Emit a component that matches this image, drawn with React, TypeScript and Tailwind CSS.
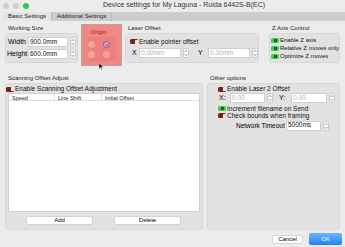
import React from "react";

const font = { fontFamily: '"Liberation Sans", Arial, sans-serif' };

// tiny macOS style stepper
const Stepper: React.FC = () => (
  <div className="w-[6px] h-[10px] rounded-[2px] bg-white border border-[#c9c9c9] flex items-center justify-center">
    <svg width="4" height="8" viewBox="0 0 4 8">
      <path d="M0.5 3 L2 1.3 L3.5 3" fill="none" stroke="#777" strokeWidth="0.7" />
      <path d="M0.5 5 L2 6.7 L3.5 5" fill="none" stroke="#777" strokeWidth="0.7" />
    </svg>
  </div>
);

const Toggle: React.FC<{ on?: boolean }> = ({ on }) =>
  on ? (
    <div className="w-[8px] h-[5px] shrink-0 rounded-[1.5px] bg-[#3ed14a] flex items-center justify-center">
      <div className="w-[3px] h-[3px] bg-[#1d5d22] rounded-[0.5px]" />
    </div>
  ) : (
    <div className="w-[8px] h-[5px] shrink-0 rounded-[1.5px] bg-[#7b2020] flex items-center justify-end pr-[0.5px]">
      <div className="w-[3px] h-[4px] bg-[#e8e8e8] rounded-[0.5px]" />
    </div>
  );

const Check: React.FC<{ on?: boolean; label: string; small?: boolean }> = ({
  on,
  label,
  small,
}) => (
  <div className="flex items-center gap-[1px] whitespace-nowrap">
    <Toggle on={on} />
    <span className={small ? "text-[6px] leading-[8px] text-[#111]" : "text-[6.5px] leading-[8px] text-[#111]"}>
      {label}
    </span>
  </div>
);

const Field: React.FC<{ value: string; w: string; muted?: boolean }> = ({ value, w, muted }) => (
  <div className="flex items-center gap-[2px]">
    <div
      className={`${w} h-[10px] bg-white border border-[#cfcfcf] flex items-center pl-[1px] text-[6.5px] leading-none whitespace-nowrap ${
        muted ? "text-[#b5b5b5]" : "text-[#111]"
      }`}
    >
      {value}
    </div>
    <Stepper />
  </div>
);

const GroupLabel: React.FC<{ children: React.ReactNode }> = ({ children }) => (
  <div className="text-[6px] leading-[7px] text-[#222] pl-[3px] whitespace-nowrap">{children}</div>
);

export default function App() {
  return (
    <div className="w-[345px] h-[247px] bg-[#ececec] overflow-hidden flex flex-col" style={font}>
      {/* title bar */}
      <div className="h-[11px] flex items-center">
        <div className="flex gap-[4px] pl-[3px]">
          <div className="w-[6px] h-[6px] rounded-full bg-[#cfcfcf]" />
          <div className="w-[6px] h-[6px] rounded-full bg-[#cfcfcf]" />
          <div className="w-[6px] h-[6px] rounded-full bg-[#34c748]" />
        </div>
        <div className="flex-1 text-center text-[7px] text-[#333] pr-[6px] whitespace-nowrap">
          Device settings for My Laguna - Ruida 6442S-B(EC)
        </div>
      </div>

      {/* tabs */}
      <div className="mt-[1px] ml-[3px] h-[9px] flex bg-[#cdcdcd] text-[6px] text-[#222] whitespace-nowrap">
        <div className="w-[49px] bg-[#e4e4e4] border-r border-[#b9b9b9] flex items-center justify-center">
          Basic Settings
        </div>
        <div className="w-[60px] border-r border-[#b9b9b9] flex items-center justify-center">
          Additional Settings
        </div>
      </div>

      {/* top row */}
      <div className="flex px-[5px] mt-[4px] h-[42px]">
        <div className="w-[73px] flex flex-col">
          <GroupLabel>Working Size</GroupLabel>
          <div className="mt-[1px] h-[30px] rounded-[3px] bg-[#e2e2e2] border border-[#d8d8d8] flex flex-col justify-center gap-[2px] pl-[1px]">
            <div className="flex items-center gap-[2px]">
              <span className="w-[19px] text-[7px] text-right">Width</span>
              <Field value="900.0mm" w="w-[40px]" />
            </div>
            <div className="flex items-center gap-[2px]">
              <span className="w-[19px] text-[7px] text-right">Height</span>
              <Field value="600.0mm" w="w-[40px]" />
            </div>
          </div>
        </div>

        {/* origin */}
        <div className="ml-[3px] w-[41px] h-[42px] -mt-[1px] bg-[#f28884] border border-[#b3a6a5] flex flex-col items-center relative">
          <div className="text-[6px] leading-[7px] text-[#9a2222] mt-[4px] -ml-[6px]">Origin</div>
          <div className="mt-[1px] w-[28px] h-[25px] rounded-[3px] bg-[#ec807c] grid grid-cols-2 gap-x-[3px] gap-y-[3px] place-content-center">
            <div className="w-[7px] h-[7px] rounded-full bg-[#f5a19d]" />
            <div className="w-[7px] h-[7px] rounded-full bg-[#f5a19d] border-[1.5px] border-[#7a5db3] flex items-center justify-center">
              <div className="w-[2px] h-[2px] rounded-full bg-[#7a5db3]" />
            </div>
            <div className="w-[7px] h-[7px] rounded-full bg-[#f5a19d]" />
            <div className="w-[7px] h-[7px] rounded-full bg-[#f5a19d]" />
          </div>
          {/* mouse cursor */}
          <svg className="absolute left-[17px] top-[38px]" width="5" height="7" viewBox="0 0 5 7">
            <path d="M0 0 L0 6 L1.5 4.6 L2.6 6.8 L3.4 6.4 L2.4 4.3 L4.5 4.3 Z" fill="#111" stroke="#fff" strokeWidth="0.4" />
          </svg>
        </div>

        {/* laser offset */}
        <div className="ml-[3px] w-[134px] flex flex-col">
          <GroupLabel>Laser Offset</GroupLabel>
          <div className="mt-[1px] h-[30px] rounded-[3px] bg-[#e2e2e2] border border-[#d8d8d8] flex flex-col justify-center gap-[2px] pl-[4px]">
            <Check label="Enable pointer offset" />
            <div className="flex items-center">
              <span className="w-[9px] text-[7px] pl-[2px]">X</span>
              <Field value="0.00mm" w="w-[42px]" muted />
              <span className="w-[16px] text-[7px] pl-[6px] ml-[3px]">Y</span>
              <Field value="0.00mm" w="w-[42px]" muted />
            </div>
          </div>
        </div>

        {/* z axis */}
        <div className="ml-[10px] w-[71px] flex flex-col">
          <GroupLabel>Z Axis Control</GroupLabel>
          <div className="mt-[1px] h-[30px] rounded-[3px] bg-[#e2e2e2] border border-[#d8d8d8] flex flex-col justify-center pl-[1px]">
            <Check on label="Enable Z axis" small />
            <Check on label="Relative Z moves only" small />
            <Check on label="Optimize Z moves" small />
          </div>
        </div>
      </div>

      {/* middle row */}
      <div className="flex px-[5px] mt-[8px] h-[155px]">
        <div className="w-[198px] flex flex-col">
          <GroupLabel>Scanning Offset Adjust</GroupLabel>
          <div className="mt-[1px] flex-1 rounded-[3px] bg-[#e2e2e2] border border-[#d8d8d8] flex flex-col px-[1px]">
            <div className="mt-[1px] -ml-[1px]">
              <Check label="Enable Scanning Offset Adjustment" />
            </div>
            <div className="mx-[1px] h-[119px] bg-white border border-[#d0d0d0] flex flex-col">
              <div className="h-[7px] flex text-[5.5px] text-[#222] border-b border-[#dedede] whitespace-nowrap">
                <div className="w-[46px] pl-[3px] border-r border-[#dedede]">Speed</div>
                <div className="w-[47px] pl-[3px] border-r border-[#dedede]">Line Shift</div>
                <div className="pl-[3px]">Initial Offset</div>
              </div>
            </div>
            <div className="flex mt-[4px] gap-[21px] pl-[19px]">
              <div className="w-[67px] h-[9px] bg-white rounded-[2px] border border-[#d3d3d3] text-[6px] flex items-center justify-center">
                Add
              </div>
              <div className="w-[67px] h-[9px] bg-white rounded-[2px] border border-[#d3d3d3] text-[6px] flex items-center justify-center">
                Delete
              </div>
            </div>
          </div>
        </div>

        <div className="ml-[4px] w-[133px] flex flex-col">
          <GroupLabel>Other options</GroupLabel>
          <div className="mt-[1px] flex-1 rounded-[3px] bg-[#e2e2e2] border border-[#d8d8d8] flex flex-col pl-[10px] pt-[1px]">
            <Check label="Enable Laser 2 Offset" />
            <div className="flex items-center">
              <span className="w-[12px] text-[7px] pl-[1px]">X:</span>
              <Field value="0.00" w="w-[35px]" muted />
              <span className="w-[18px] text-[7px] pl-[6px]">Y:</span>
              <Field value="0.00" w="w-[36px]" muted />
            </div>
            <div className="mt-[1px]">
              <Check on label="Increment filename on Send" />
              <div className="-mt-[1px]">
                <Check label="Check bounds when framing" />
              </div>
            </div>
            <div className="flex items-center mt-[1px] pl-[18px]">
              <span className="w-[50px] text-[6.5px] whitespace-nowrap">Network Timeout</span>
              <Field value="5000ms" w="w-[35px]" />
            </div>
          </div>
        </div>
      </div>

      {/* bottom buttons */}
      <div className="flex justify-end items-center gap-[6px] pr-[3px] mt-[3px]">
        <div className="w-[31px] h-[9px] bg-white rounded-[2px] border border-[#d3d3d3] text-[6px] flex items-center justify-center">
          Cancel
        </div>
        <div className="w-[33px] h-[12px] rounded-[2px] bg-gradient-to-b from-[#6cb3fa] to-[#1a82fb] text-white text-[6px] flex items-center justify-center">
          OK
        </div>
      </div>
    </div>
  );
}
